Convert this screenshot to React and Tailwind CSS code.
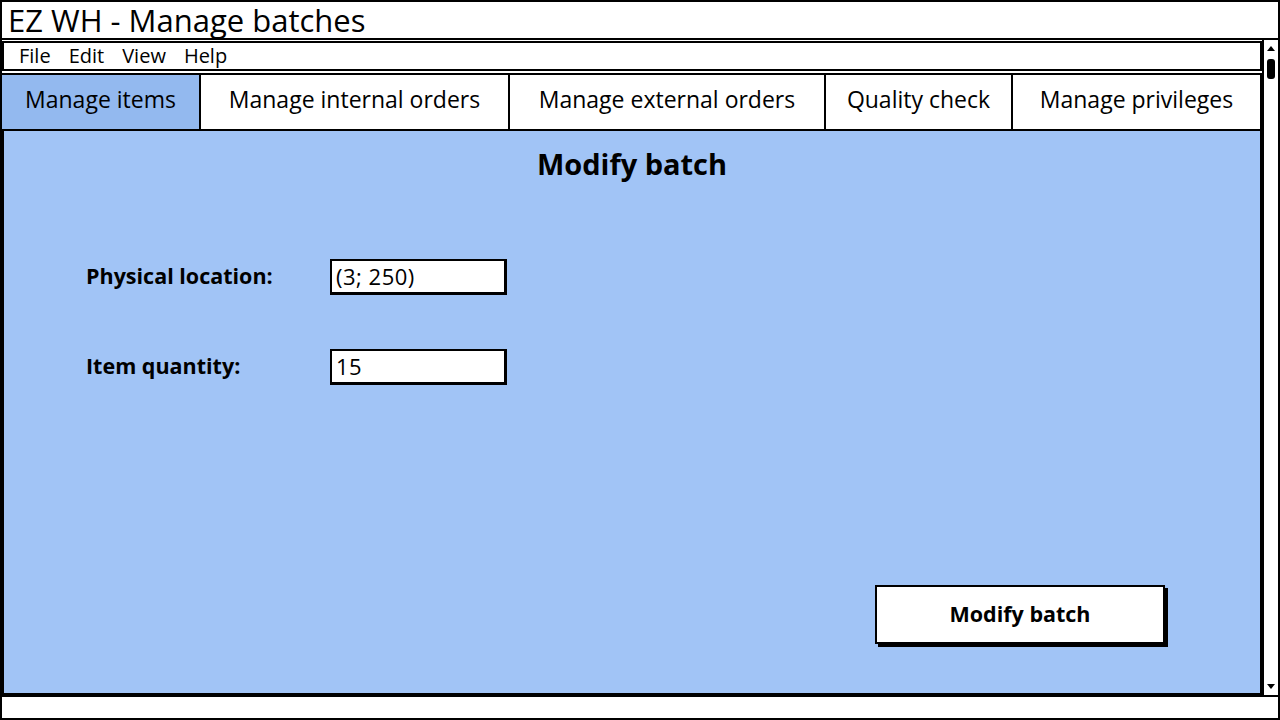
import React from 'react';

const tabs = [
  { label: 'Manage items', w: 'w-[199px]', active: true },
  { label: 'Manage internal orders', w: 'w-[309px]' },
  { label: 'Manage external orders', w: 'w-[316px]' },
  { label: 'Quality check', w: 'w-[187px]' },
  { label: 'Manage privileges', w: 'flex-1' },
];

function Field({ label, value }) {
  return (
    <div className="flex items-center h-[36px]">
      <div className="w-[244px] text-[21.5px] font-bold pb-[2px]">{label}</div>
      <div className="w-[177px] h-[36px] bg-white border-2 border-black border-r-[3px] border-b-[3px] flex items-center px-[4px] text-[22px] tracking-[0.5px]">
        {value}
      </div>
    </div>
  );
}

export default function App() {
  return (
    <div
      className="w-[1280px] h-[720px] bg-white border-2 border-black flex flex-col text-black overflow-hidden"
      style={{ fontFamily: '"Open Sans", Lato, sans-serif' }}
    >
      {/* Title bar */}
      <div className="h-[38px] border-b-2 border-black flex items-center px-[6px] text-[31px] leading-[36px]">
        EZ WH - Manage batches
      </div>

      <div className="flex-1 flex min-h-0">
        <div className="flex-1 flex flex-col min-w-0">
          {/* Menu bar */}
          <div className="h-[30px] mt-[1px] border-2 border-black flex items-center gap-[18px] pl-[15px] text-[20px] leading-[26px]">
            <span>File</span>
            <span>Edit</span>
            <span>View</span>
            <span>Help</span>
          </div>

          {/* Tabs */}
          <div className="flex h-[56px] mt-[2px] border-t-2 border-black">
            {tabs.map((t) => (
              <div
                key={t.label}
                className={`${t.w} border-r-2 border-black flex items-center justify-center text-[23px] pb-[5px] ${
                  t.active ? 'bg-[#93b9ef]' : 'bg-white'
                }`}
              >
                {t.label}
              </div>
            ))}
          </div>

          {/* Content */}
          <div className="flex-1 bg-[#a1c4f6] border-2 border-black flex flex-col">
            <h1 className="text-center text-[29px] font-bold mt-[18px] leading-none">Modify batch</h1>
            <div className="flex flex-col gap-[54px] pl-[82px] mt-[81px]">
              <Field label="Physical location:" value="(3; 250)" />
              <Field label="Item quantity:" value="15" />
            </div>
            <div className="flex-1" />
            <div className="flex justify-end pr-[95px] mb-[49px]">
              <button className="w-[290px] h-[59px] bg-white border-2 border-black shadow-[3px_3px_0_#000] text-[21.5px] font-bold">
                Modify batch
              </button>
            </div>
          </div>
        </div>

        {/* Scrollbar */}
        <div className="w-[16px] border-l-2 border-black flex flex-col items-center">
          <svg width="12" height="10" viewBox="0 0 12 10" className="mt-[3px]">
            <path d="M2 8 L6 3 L10 8 Z" fill="#000" />
          </svg>
          <div className="w-[8px] h-[20px] bg-black rounded-[3px] mt-[6px]" />
          <div className="flex-1" />
          <svg width="12" height="10" viewBox="0 0 12 10" className="mb-[3px]">
            <path d="M2 2 L6 7 L10 2 Z" fill="#000" />
          </svg>
        </div>
      </div>

      {/* Bottom bar */}
      <div className="h-[23px] border-t-2 border-black bg-white" />
    </div>
  );
}
